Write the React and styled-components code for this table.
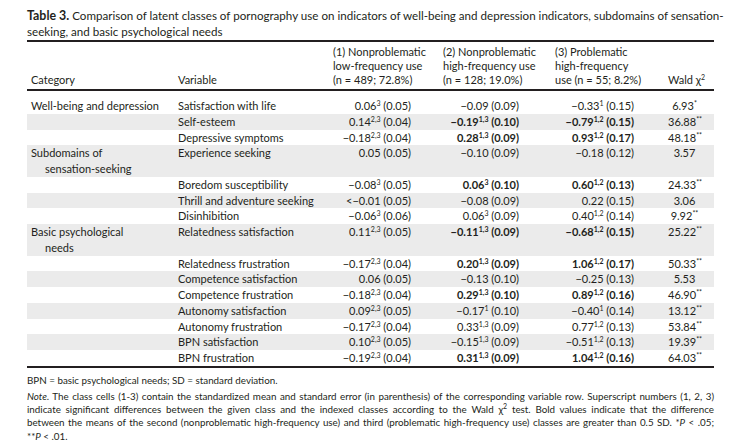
import React from 'react'
import styled, { createGlobalStyle } from 'styled-components'

const GlobalStyle = createGlobalStyle`
  body {
    margin: 0;
    background: #fff;
    color: #231f20;
    font-family: Lato, "Open Sans", sans-serif;
  }
`

const Page = styled.div`
  width: 687px;
  padding: 8px 0 0 27px;
`

const Caption = styled.div`
  font-size: 11.6px;
  line-height: 16px;
  white-space: nowrap;
  b { font-weight: 700; font-size: 12.4px; line-height: 1; }
`

const Table = styled.table`
  width: 687px;
  border-collapse: collapse;
  table-layout: fixed;
  font-size: 11px;
  border-top: 2px solid #231f20;
  border-bottom: 2px solid #231f20;
`

const HeadRow = styled.tr`
  border-bottom: 2px solid #231f20;
`

const Th = styled.th`
  font-weight: 400;
  text-align: left;
  vertical-align: bottom;
  line-height: 14px;
  padding: 3px 0 2px ${p => p.$pl || 3}px;
  white-space: nowrap;
`

const Row = styled.tr`
  background: ${p => (p.$shade ? '#ebebeb' : 'transparent')};
  td { padding-top: ${p => (p.$first ? 7 : 0)}px; padding-bottom: 0; }
`

const Td = styled.td`
  line-height: 15.75px;
  vertical-align: top;
  white-space: nowrap;
  text-align: ${p => p.$align || 'left'};
  padding-left: ${p => p.$pl ?? 3}px;
  padding-right: ${p => p.$pr ?? 0}px;
  font-weight: ${p => (p.$bold ? 700 : 400)};
`

const CatCell = styled(Td)`
  padding-left: 18px;
  text-indent: -14px;
`

const Sup = styled.sup`
  font-size: 7px;
  line-height: 0;
  vertical-align: 4px;
`

const Notes = styled.div`
  margin-top: 6px;
  font-size: 9.8px;
  line-height: 13.4px;
`

const NoteLine = styled.div`
  text-align: ${p => (p.$justify ? 'justify' : 'left')};
  text-align-last: ${p => (p.$justify ? 'justify' : 'left')};
  white-space: ${p => (p.$justify ? 'normal' : 'nowrap')};
  margin-top: ${p => p.$gap || 0}px;
`

const Val = ({ v, s, se }) => (
  <>
    {v}
    {s ? <Sup>{s}</Sup> : null} ({se})
  </>
)

const rows = [
  { cat: 'Well-being and depression', name: 'Satisfaction with life', c1: ['0.06', '3', '0.05'], c2: ['−0.09', '', '0.09'], c3: ['−0.33', '1', '0.15'], w: ['6.93', '*'] },
  { name: 'Self-esteem', c1: ['0.14', '2,3', '0.04'], c2: ['−0.19', '1,3', '0.10'], c3: ['−0.79', '1,2', '0.15'], b: true, w: ['36.88', '**'] },
  { name: 'Depressive symptoms', c1: ['−0.18', '2,3', '0.04'], c2: ['0.28', '1,3', '0.09'], c3: ['0.93', '1,2', '0.17'], b: true, w: ['48.18', '**'] },
  { cat: ['Subdomains of', 'sensation-seeking'], name: 'Experience seeking', c1: ['0.05', '', '0.05'], c2: ['−0.10', '', '0.09'], c3: ['−0.18', '', '0.12'], w: ['3.57', ''] },
  { name: 'Boredom susceptibility', c1: ['−0.08', '3', '0.05'], c2: ['0.06', '3', '0.10'], c3: ['0.60', '1,2', '0.13'], b: true, w: ['24.33', '**'] },
  { name: 'Thrill and adventure seeking', c1: ['<−0.01', '', '0.05'], c2: ['−0.08', '', '0.09'], c3: ['0.22', '', '0.15'], w: ['3.06', ''] },
  { name: 'Disinhibition', c1: ['−0.06', '3', '0.06'], c2: ['0.06', '3', '0.09'], c3: ['0.40', '1,2', '0.14'], w: ['9.92', '**'] },
  { cat: ['Basic psychological', 'needs'], name: 'Relatedness satisfaction', c1: ['0.11', '2,3', '0.05'], c2: ['−0.11', '1,3', '0.09'], c3: ['−0.68', '1,2', '0.15'], b: true, w: ['25.22', '**'] },
  { name: 'Relatedness frustration', c1: ['−0.17', '2,3', '0.04'], c2: ['0.20', '1,3', '0.09'], c3: ['1.06', '1,2', '0.17'], b: true, w: ['50.33', '**'] },
  { name: 'Competence satisfaction', c1: ['0.06', '', '0.05'], c2: ['−0.13', '', '0.10'], c3: ['−0.25', '', '0.13'], w: ['5.53', ''] },
  { name: 'Competence frustration', c1: ['−0.18', '2,3', '0.04'], c2: ['0.29', '1,3', '0.10'], c3: ['0.89', '1,2', '0.16'], b: true, w: ['46.90', '**'] },
  { name: 'Autonomy satisfaction', c1: ['0.09', '2,3', '0.05'], c2: ['−0.17', '1', '0.10'], c3: ['−0.40', '1', '0.14'], w: ['13.12', '**'] },
  { name: 'Autonomy frustration', c1: ['−0.17', '2,3', '0.04'], c2: ['0.33', '1,3', '0.09'], c3: ['0.77', '1,2', '0.13'], w: ['53.84', '**'] },
  { name: 'BPN satisfaction', c1: ['0.10', '2,3', '0.05'], c2: ['−0.15', '1,3', '0.09'], c3: ['−0.51', '1,2', '0.13'], w: ['19.39', '**'] },
  { name: 'BPN frustration', c1: ['−0.19', '2,3', '0.04'], c2: ['0.31', '1,3', '0.09'], c3: ['1.04', '1,2', '0.16'], b: true, w: ['64.03', '**'] },
]

export default function App() {
  return (
    <Page>
      <GlobalStyle />
      <Caption>
        <b>Table 3.</b> Comparison of latent classes of pornography use on indicators of well-being and depression indicators, subdomains of sensation-
        <br />
        seeking, and basic psychological needs
      </Caption>
      <Table>
        <colgroup>
          <col style={{ width: 148 }} />
          <col style={{ width: 155 }} />
          <col style={{ width: 110 }} />
          <col style={{ width: 112 }} />
          <col style={{ width: 113 }} />
          <col style={{ width: 49 }} />
        </colgroup>
        <thead>
          <HeadRow>
            <Th $pl={4}>Category</Th>
            <Th>Variable</Th>
            <Th>(1) Nonproblematic<br />low-frequency use<br />(n = 489; 72.8%)</Th>
            <Th>(2) Nonproblematic<br />high-frequency use<br />(n = 128; 19.0%)</Th>
            <Th>(3) Problematic<br />high-frequency<br />use (n = 55; 8.2%)</Th>
            <Th>Wald χ<Sup>2</Sup></Th>
          </HeadRow>
        </thead>
        <tbody>
          {rows.map((r, i) => (
            <Row key={r.name} $shade={i % 2 === 1} $first={i === 0}>
              {Array.isArray(r.cat) ? (
                <CatCell>{r.cat[0]}<br />{r.cat[1]}</CatCell>
              ) : (
                <Td $pl={4}>{r.cat || ''}</Td>
              )}
              <Td>{r.name}</Td>
              <Td $align="right" $pr={29}><Val v={r.c1[0]} s={r.c1[1]} se={r.c1[2]} /></Td>
              <Td $align="right" $pr={33} $bold={r.b}><Val v={r.c2[0]} s={r.c2[1]} se={r.c2[2]} /></Td>
              <Td $align="right" $pr={31} $bold={r.b}><Val v={r.c3[0]} s={r.c3[1]} se={r.c3[2]} /></Td>
              <Td $align="center" $pr={13}>{r.w[0]}{r.w[1] ? <Sup>{r.w[1]}</Sup> : null}</Td>
            </Row>
          ))}
        </tbody>
      </Table>
      <Notes>
        <NoteLine>BPN = basic psychological needs; SD = standard deviation.</NoteLine>
        <NoteLine $justify $gap={2.5}>
          <i>Note</i>. The class cells (1-3) contain the standardized mean and standard error (in parenthesis) of the corresponding variable row. Superscript numbers (1, 2, 3)
        </NoteLine>
        <NoteLine $justify>
          indicate significant differences between the given class and the indexed classes according to the Wald χ<Sup>2</Sup> test. Bold values indicate that the difference
        </NoteLine>
        <NoteLine $justify>
          between the means of the second (nonproblematic high-frequency use) and third (problematic high-frequency use) classes are greater than 0.5 SD. *<i>P</i> &lt; .05;
        </NoteLine>
        <NoteLine>**<i>P</i> &lt; .01.</NoteLine>
      </Notes>
    </Page>
  )
}
